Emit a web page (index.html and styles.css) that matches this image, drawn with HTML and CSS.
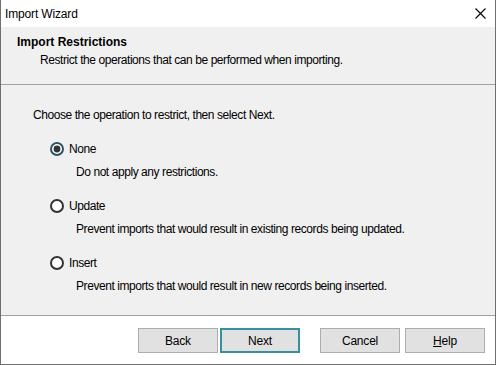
FILE: index.html
```html
<!DOCTYPE html>
<html lang="en">
<head>
    <meta charset="UTF-8">
    <title>Import Wizard</title>
    <link rel="stylesheet" href="styles.css">
</head>
<body>
    <div class="window">
        <div class="titlebar">
            <span class="title">Import Wizard</span>
            <svg class="close" width="11" height="11" viewBox="0 0 11 11">
                <path d="M0.5 0.5 L10.5 10.5 M10.5 0.5 L0.5 10.5" stroke="#000" stroke-width="1.1" fill="none"/>
            </svg>
        </div>

        <div class="header">
            <div class="header-title">Import Restrictions</div>
            <div class="header-sub">Restrict the operations that can be performed when importing.</div>
        </div>

        <div class="content">
            <div class="intro">Choose the operation to restrict, then select Next.</div>

            <div class="option">
                <label class="radio-row">
                    <svg class="radio" width="14" height="14" viewBox="0 0 14 14">
                        <circle cx="7" cy="7" r="6" fill="#fff" stroke="#2c5566" stroke-width="2"/>
                        <circle cx="7" cy="7" r="3.4" fill="#333"/>
                    </svg>
                    <span>None</span>
                </label>
                <div class="desc">Do not apply any restrictions.</div>
            </div>

            <div class="option">
                <label class="radio-row">
                    <svg class="radio" width="14" height="14" viewBox="0 0 14 14">
                        <circle cx="7" cy="7" r="6" fill="#fff" stroke="#333" stroke-width="2"/>
                    </svg>
                    <span>Update</span>
                </label>
                <div class="desc">Prevent imports that would result in existing records being updated.</div>
            </div>

            <div class="option">
                <label class="radio-row">
                    <svg class="radio" width="14" height="14" viewBox="0 0 14 14">
                        <circle cx="7" cy="7" r="6" fill="#fff" stroke="#333" stroke-width="2"/>
                    </svg>
                    <span>Insert</span>
                </label>
                <div class="desc">Prevent imports that would result in new records being inserted.</div>
            </div>
        </div>

        <div class="footer">
            <div class="nav-buttons">
                <button class="btn">Back</button>
                <button class="btn btn-default">Next</button>
            </div>
            <button class="btn">Cancel</button>
            <button class="btn"><u>H</u>elp</button>
        </div>
    </div>
</body>
</html>
```

FILE: styles.css
```css
body {
    margin: 0;
    font-family: "Liberation Sans", Arial, sans-serif;
    font-size: 12px;
    line-height: 16px;
    letter-spacing: -0.43px;
    color: #000;
    background: #fff;
}
.window {
    width: 496px;
    height: 365px;
    box-sizing: border-box;
    border: 1px solid #6f6f6f;
    border-top: none;
    display: flex;
    flex-direction: column;
}
.titlebar {
    height: 27px;
    flex: none;
    display: flex;
    align-items: center;
    justify-content: space-between;
    padding: 0 9px 0 4px;
    background: #fff;
    letter-spacing: -0.15px;
}
.close {
    margin-top: -1px;
}
.header {
    height: 58px;
    flex: none;
    background: #f0f0f0;
    border-bottom: 1px solid #a0a0a0;
    padding: 7px 16px 0;
    box-sizing: border-box;
}
.header-title {
    font-weight: bold;
    letter-spacing: 0;
}
.header-sub {
    margin-top: 2px;
    padding-left: 23px;
}
.content {
    flex: 1;
    background: #f0f0f0;
    border-bottom: 1px solid #a0a0a0;
    padding: 22px 32px 0;
}
.intro {
    margin-bottom: 18px;
}
.option {
    padding-left: 17px;
    margin-bottom: 18px;
}
.radio-row {
    display: flex;
    align-items: center;
    gap: 5px;
}
.desc {
    margin-top: 7px;
    padding-left: 26px;
}
.footer {
    height: 48px;
    flex: none;
    background: #fff;
    display: flex;
    justify-content: flex-end;
    align-items: flex-start;
    padding: 12px 10px 0 0;
    box-sizing: border-box;
    gap: 5px;
}
.nav-buttons {
    display: flex;
    gap: 2px;
    margin-right: 15px;
}
.btn {
    width: 80px;
    height: 25px;
    background: #e1e1e1;
    border: 1px solid #adadad;
    font-family: inherit;
    font-size: 12px;
    letter-spacing: -0.2px;
    color: #000;
    padding: 0;
}
.btn-default {
    border: 2px solid #37909a;
}
```
